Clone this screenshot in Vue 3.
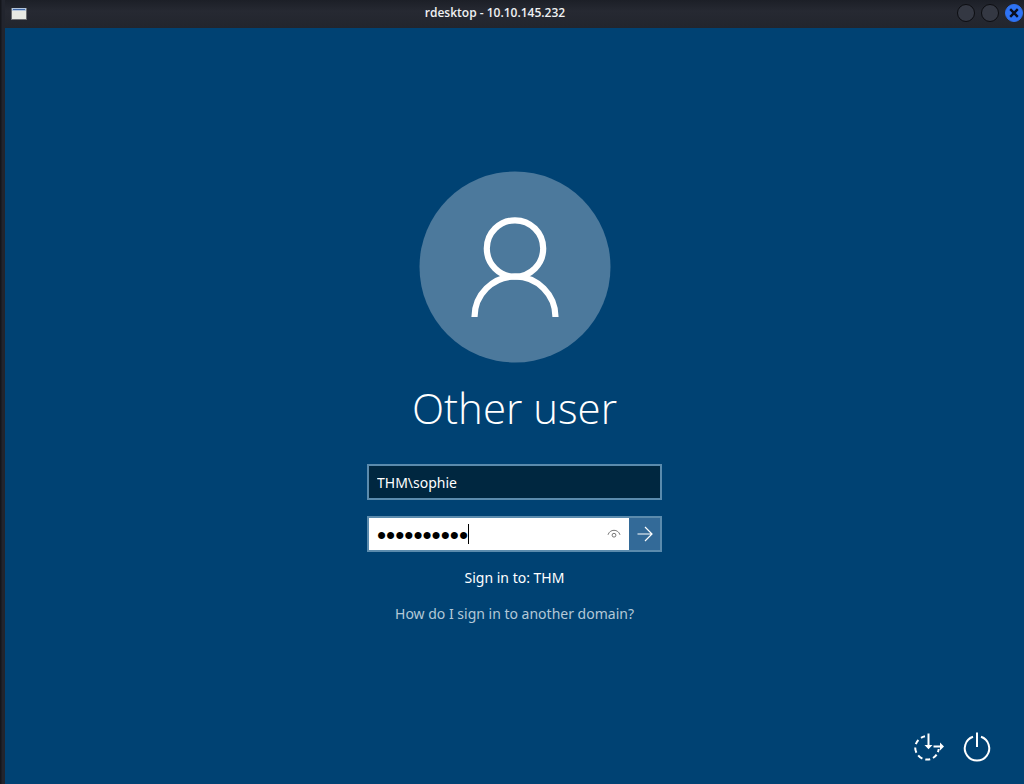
<script setup>
import { ref } from 'vue'

const username = ref('THM\\sophie')
const password = ref('password12')
</script>

<template>
  <div class="window">
    <header class="titlebar">
      <svg class="app-icon" width="16" height="14" viewBox="0 0 16 14" aria-hidden="true">
        <rect x="0" y="1" width="16" height="12" fill="#6b6d70" />
        <rect x="1" y="1" width="14" height="11" fill="#e8e9e3" />
        <rect x="1" y="1" width="14" height="3" fill="#b4c6dd" />
        <rect x="2" y="2" width="12" height="1" fill="#3f68a8" />
      </svg>
      <h1 class="title">rdesktop - 10.10.145.232</h1>
      <div class="controls">
        <button class="control" type="button" aria-label="Minimize"></button>
        <button class="control" type="button" aria-label="Maximize"></button>
        <button class="control close" type="button" aria-label="Close">
          <svg width="10" height="10" viewBox="0 0 10 10" aria-hidden="true">
            <path d="M1.200 1.200 8.800 8.800M8.800 1.200 1.200 8.800" stroke="#0b1020" stroke-width="2.400" fill="none" />
          </svg>
        </button>
      </div>
    </header>

    <main class="screen">
      <form class="login" @submit.prevent>
        <svg class="avatar" width="192" height="192" viewBox="0 0 192 192" aria-hidden="true">
          <circle cx="96" cy="96" r="95.500" fill="#4c799c" />
          <circle cx="96" cy="77.500" r="28.200" fill="none" stroke="#fff" stroke-width="6.200" />
          <path d="M55.500 146A40.500 40.500 0 0 1 136.500 146" fill="none" stroke="#fff" stroke-width="6.200" />
        </svg>

        <h2 class="heading">Other user</h2>

        <input v-model="username" class="box user" type="text" aria-label="User name" spellcheck="false" />

        <div class="box secret">
          <input v-model="password" class="pass" type="password" aria-label="Password" />
          <span class="caret"></span>
          <button class="reveal" type="button" aria-label="Show password">
            <svg width="14" height="10" viewBox="0 0 14 10" fill="none" stroke="#777" aria-hidden="true">
              <path d="M1 5.800C2 2.800 4.300 1.300 7 1.300S12 2.800 13 5.800" />
              <circle cx="7" cy="6.200" r="1.900" />
            </svg>
          </button>
          <button class="submit" type="submit" aria-label="Submit">
            <svg width="16" height="16" viewBox="0 0 16 16" fill="none" stroke="#fff" stroke-width="1.200" aria-hidden="true">
              <path d="M0.500 8H15M8 1 15 8 8 15" />
            </svg>
          </button>
        </div>

        <p class="domain">Sign in to: THM</p>
        <a class="help" href="#">How do I sign in to another domain?</a>
      </form>

      <footer class="actions">
        <button class="action" type="button" aria-label="Ease of access">
          <svg width="32" height="32" viewBox="0 0 32 32" fill="none" stroke="#fff" stroke-width="2" aria-hidden="true">
            <path d="M12 5.200A11.800 11.800 0 0 0 8 6.800M5.400 9A11.800 11.800 0 0 0 2.800 13.200M2.200 16.500A11.800 11.800 0 0 0 3.400 21.800M5.200 24.300A11.800 11.800 0 0 0 9.400 27.600M12.300 28.400A11.800 11.800 0 0 0 17.200 28.200M20 27A11.800 11.800 0 0 0 23.600 23.600M24.900 21.200A11.800 11.800 0 0 0 25.700 18" />
            <path d="M15.500 2.500V15M20.500 15.500H29" />
            <path d="M11.500 14H19.500L15.500 18.200ZM27 11.500V19.500L31 15.500Z" fill="#fff" stroke="none" />
          </svg>
        </button>
        <button class="action" type="button" aria-label="Power">
          <svg width="32" height="32" viewBox="0 0 32 32" fill="none" stroke="#fff" stroke-width="2" aria-hidden="true">
            <path d="M12 5.800A12.200 12.200 0 1 0 20 5.800M16 1.500V16" />
          </svg>
        </button>
      </footer>
    </main>
  </div>
</template>

<style>
body {
  background: #22252e;
}
</style>

<style scoped>
.window {
  display: flex;
  flex-direction: column;
  min-height: 100vh;
  box-sizing: border-box;
  padding-left: 5px;
  background: linear-gradient(to right, #14161c 1px, #22252e 2px);
  font-family: "Noto Sans", "Open Sans", sans-serif;
}

button {
  padding: 0;
  border: 0;
  background: none;
  display: flex;
  align-items: center;
  justify-content: center;
}

svg {
  display: block;
}

.titlebar {
  display: flex;
  align-items: center;
  height: 28px;
  background: linear-gradient(#1c1f27, #262932 40%, #22252d);
}

.app-icon {
  margin: 0 6px;
}

.title {
  flex: 1;
  margin: 0;
  padding-bottom: 2px;
  color: #f0f1f3;
  font-family: "Open Sans", sans-serif;
  font-size: 12px;
  line-height: 24px;
  font-weight: 600;
  text-align: center;
}

.controls {
  display: flex;
  gap: 6px;
  padding: 0 1px 2px 0;
}

.control {
  width: 18px;
  height: 18px;
  box-sizing: border-box;
  border: 1px solid #0c0d11;
  border-radius: 50%;
  background: #343843;
}

.close {
  border-color: #2e70ee;
  background: #2e73f5;
}

.screen {
  flex: 1;
  display: flex;
  flex-direction: column;
  justify-content: space-between;
  background: #004273;
}

.login {
  display: flex;
  flex-direction: column;
  align-items: center;
  padding-top: 143px;
}

.heading {
  margin: 13px 0 25px;
  color: #fff;
  font-family: "Open Sans", sans-serif;
  font-size: 42px;
  line-height: 63px;
  font-weight: 300;
}

.box {
  width: 295px;
  height: 36px;
  box-sizing: border-box;
  border: 2px solid #5b8bad;
}

.user {
  padding: 0 8px;
  background: #002740;
  color: #fff;
  font-family: inherit;
  font-size: 14px;
  outline: none;
}

.secret {
  position: relative;
  display: flex;
  margin-top: 16px;
  background: #fff;
}

.pass {
  flex: 1;
  min-width: 0;
  padding: 2px 8px 0;
  border: 0;
  background: none;
  color: #000;
  font-family: "Liberation Sans", sans-serif;
  font-size: 26px;
  outline: none;
}

.caret {
  position: absolute;
  left: 99px;
  top: 6px;
  width: 1px;
  height: 20px;
  background: #000;
}

.reveal {
  width: 30px;
}

.submit {
  width: 31px;
  background: #336a98;
}

.domain {
  margin: 16px 0;
  color: #fff;
  font-size: 14px;
  line-height: 20px;
}

.help {
  color: #b3c8d7;
  font-size: 14px;
  line-height: 20px;
  text-decoration: none;
}

.actions {
  display: flex;
  justify-content: flex-end;
  gap: 16px;
  padding: 0 31px 21px;
}
</style>
